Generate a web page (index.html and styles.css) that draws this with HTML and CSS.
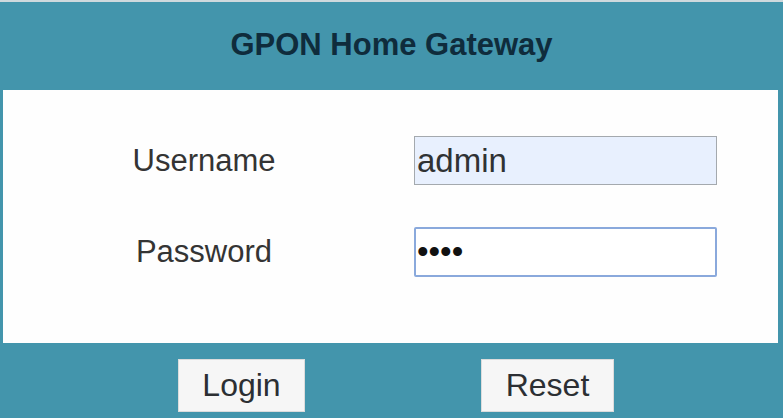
FILE: index.html
```html
<!DOCTYPE html>
<html lang="en">
<head>
<meta charset="utf-8">
<title>GPON Home Gateway</title>
<link rel="stylesheet" href="styles.css">
</head>
<body>
<div class="page">
  <header class="header">GPON Home Gateway</header>
  <main class="panel">
    <form class="form-grid">
      <label class="label" for="user">Username</label>
      <div class="field"><input id="user" class="input input-user" type="text" value="admin"></div>
      <label class="label" for="pass">Password</label>
      <div class="field"><input id="pass" class="input input-pass" type="password" value="1234"></div>
    </form>
  </main>
  <footer class="footer">
    <button class="btn btn-login" type="button">Login</button>
    <button class="btn btn-reset" type="button">Reset</button>
  </footer>
</div>
</body>
</html>
```

FILE: styles.css
```css
html, body {
  margin: 0;
  padding: 0;
}
body {
  width: 783px;
  height: 418px;
  overflow: hidden;
  background: #4395ac;
  font-family: "Liberation Sans", Arial, sans-serif;
}
.page {
  display: flex;
  flex-direction: column;
  height: 418px;
  border-top: 2px solid #cfd9dd;
  box-sizing: border-box;
}
.header {
  height: 88px;
  display: flex;
  align-items: center;
  justify-content: center;
  font-size: 31px;
  font-weight: bold;
  color: #0f2c3c;
  padding-bottom: 2px;
  box-sizing: border-box;
}
.panel {
  height: 253px;
  margin: 0 5px 0 3px;
  background: #fefefe;
  padding-top: 46px;
  box-sizing: border-box;
}
.form-grid {
  display: grid;
  grid-template-columns: 402px 1fr;
  row-gap: 42px;
  align-items: center;
  margin: 0;
}
.label {
  text-align: center;
  font-size: 31px;
  color: #343434;
}
.field {
  padding-left: 9px;
}
.input {
  display: block;
  box-sizing: border-box;
  width: 303px;
  font-family: "Liberation Sans", Arial, sans-serif;
  font-size: 33px;
  color: #2f3234;
  outline: none;
  margin: 0;
}
.input-user {
  height: 49px;
  padding: 0 2px;
  background: #e8f0fe;
  border: 1px solid #a4a9ae;
}
.input-pass {
  height: 50px;
  padding: 0 1px;
  background: #ffffff;
  border: 2px solid #8aa9dc;
  border-radius: 2px;
  color: #111;
  font-size: 33px;
  letter-spacing: 0;
}
.footer {
  flex: 1;
  display: flex;
  align-items: flex-start;
  padding: 16px 0 0 178px;
  gap: 176px;
}
.btn {
  height: 53px;
  background: #f6f6f6;
  border: 1px solid #dcdcdc;
  border-radius: 0;
  font-family: "Liberation Sans", Arial, sans-serif;
  font-size: 32px;
  color: #2c2f33;
  padding: 0;
  margin: 0;
}
.btn-login {
  width: 127px;
}
.btn-reset {
  width: 133px;
}
```
